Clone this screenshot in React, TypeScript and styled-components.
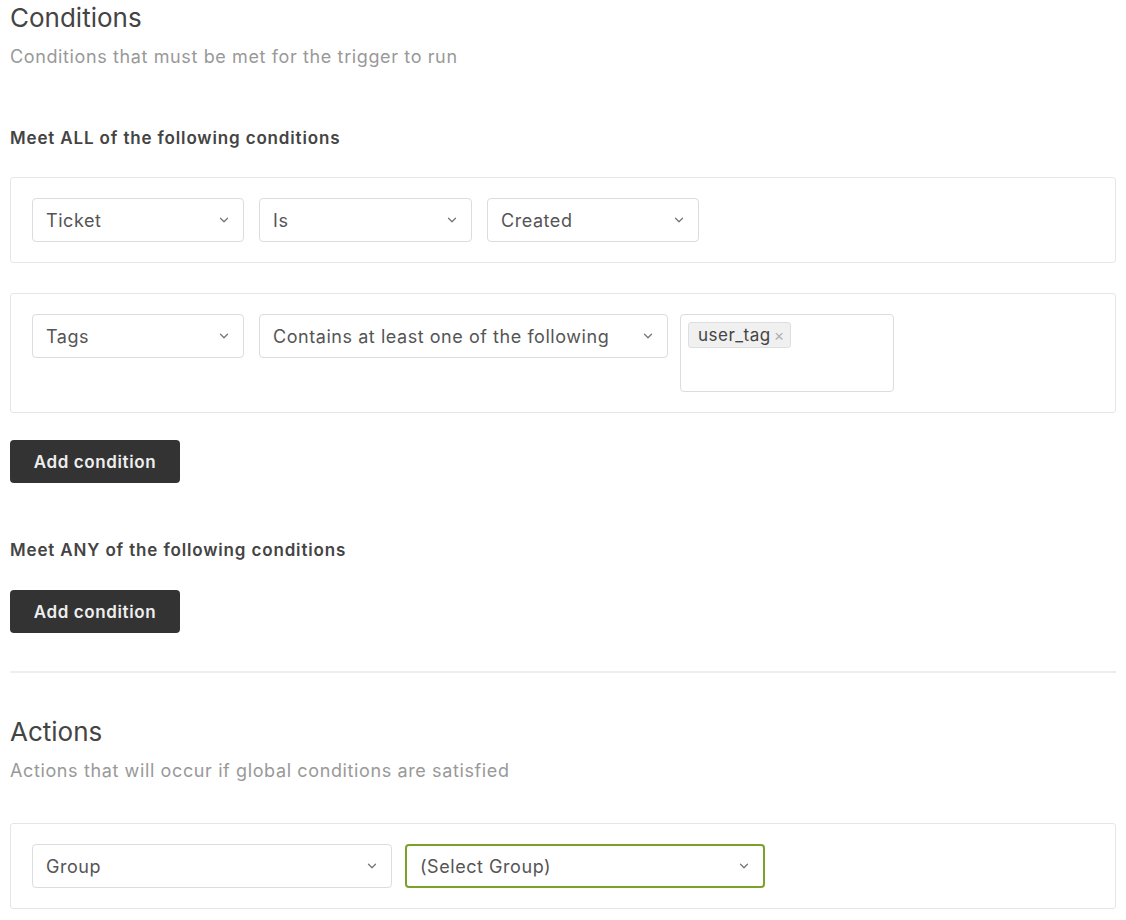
import React from 'react'
import styled, { createGlobalStyle } from 'styled-components'

const GlobalStyle = createGlobalStyle`
  body {
    margin: 0;
    background: #fff;
    font-family: Inter, "Liberation Sans", Arial, sans-serif;
    color: #444;
  }
`

const Page = styled.div`
  padding: 0 10px 0 10px;
  width: 1106px;
`

const Title = styled.h2<{ $top?: number }>`
  margin: ${({ $top }) => $top ?? 0}px 0 0 0;
  padding-top: 2px;
  font-size: 26px;
  font-weight: 400;
  line-height: 32px;
  color: #444;
`

const Subtitle = styled.p`
  margin: 11px 0 0 0;
  font-size: 18px;
  line-height: 24px;
  letter-spacing: 0.62px;
  color: #999;
`

const GroupLabel = styled.h4<{ $top: number }>`
  margin: ${({ $top }) => $top}px 0 0 0;
  font-size: 17px;
  font-weight: 600;
  line-height: 24px;
  letter-spacing: 0.85px;
  color: #444;
`

const Card = styled.div<{ $top: number; $gap: number }>`
  margin-top: ${({ $top }) => $top}px;
  border: 1px solid #e6e6e6;
  border-radius: 3px;
  padding: 20px 21px;
  display: flex;
  align-items: flex-start;
  gap: ${({ $gap }) => $gap}px;
`

const SelectBox = styled.div<{ $width: number; $active?: boolean }>`
  box-sizing: border-box;
  width: ${({ $width }) => $width}px;
  height: 44px;
  border: ${({ $active }) => ($active ? '2px solid #7aa22b' : '1px solid #dcdcdc')};
  border-radius: 4px;
  padding: 0 14px 0 13px;
  display: flex;
  align-items: center;
  justify-content: space-between;
  font-size: 18px;
  letter-spacing: 0.55px;
  color: #555;
  background: #fff;
`

const Chevron = () => (
  <svg width="10" height="6" viewBox="0 0 10 6" fill="none">
    <path d="M1.5 1.2l3.5 3.5 3.5-3.5" stroke="#777" strokeWidth="1.3" strokeLinecap="round" strokeLinejoin="round" />
  </svg>
)

const TagBox = styled.div`
  box-sizing: border-box;
  width: 214px;
  height: 78px;
  border: 1px solid #dcdcdc;
  border-radius: 4px;
  padding: 7px 7px;
  margin-left: -3px;
`

const Chip = styled.span`
  display: inline-flex;
  align-items: center;
  gap: 3px;
  height: 26px;
  box-sizing: border-box;
  padding: 0 5px 0 9px;
  background: #f0f0f0;
  border: 1px solid #dedede;
  border-radius: 3px;
  font-size: 17px;
  letter-spacing: 0.5px;
  color: #444;
`

const ChipClose = styled.span`
  font-size: 16px;
  color: #b0b0b0;
  line-height: 1;
`

const Button = styled.button<{ $top: number }>`
  display: block;
  margin-top: ${({ $top }) => $top}px;
  width: 170px;
  height: 43px;
  border: none;
  border-radius: 4px;
  background: #333;
  color: #eee;
  font-family: inherit;
  font-size: 17px;
  font-weight: 600;
  letter-spacing: 0.6px;
  cursor: pointer;
`

const Divider = styled.hr`
  margin: 38px 0 0 0;
  border: none;
  border-top: 2px solid #eee;
`

const Select = ({ label, width, active }: { label: string; width: number; active?: boolean }) => (
  <SelectBox $width={width} $active={active}>
    <span>{label}</span>
    <Chevron />
  </SelectBox>
)

export default function App() {
  return (
    <Page>
      <GlobalStyle />
      <Title>Conditions</Title>
      <Subtitle>Conditions that must be met for the trigger to run</Subtitle>

      <GroupLabel $top={57}>Meet ALL of the following conditions</GroupLabel>
      <Card $top={27} $gap={15}>
        <Select label="Ticket" width={212} />
        <Select label="Is" width={213} />
        <Select label="Created" width={212} />
      </Card>
      <Card $top={30} $gap={15}>
        <Select label="Tags" width={212} />
        <Select label="Contains at least one of the following" width={409} />
        <TagBox>
          <Chip>
            user_tag<ChipClose>×</ChipClose>
          </Chip>
        </TagBox>
      </Card>
      <Button $top={27}>Add condition</Button>

      <GroupLabel $top={55}>Meet ANY of the following conditions</GroupLabel>
      <Button $top={28}>Add condition</Button>

      <Divider />

      <Title $top={41}>Actions</Title>
      <Subtitle>Actions that will occur if global conditions are satisfied</Subtitle>
      <Card $top={40} $gap={13}>
        <Select label="Group" width={360} />
        <Select label="(Select Group)" width={360} active />
      </Card>
    </Page>
  )
}
